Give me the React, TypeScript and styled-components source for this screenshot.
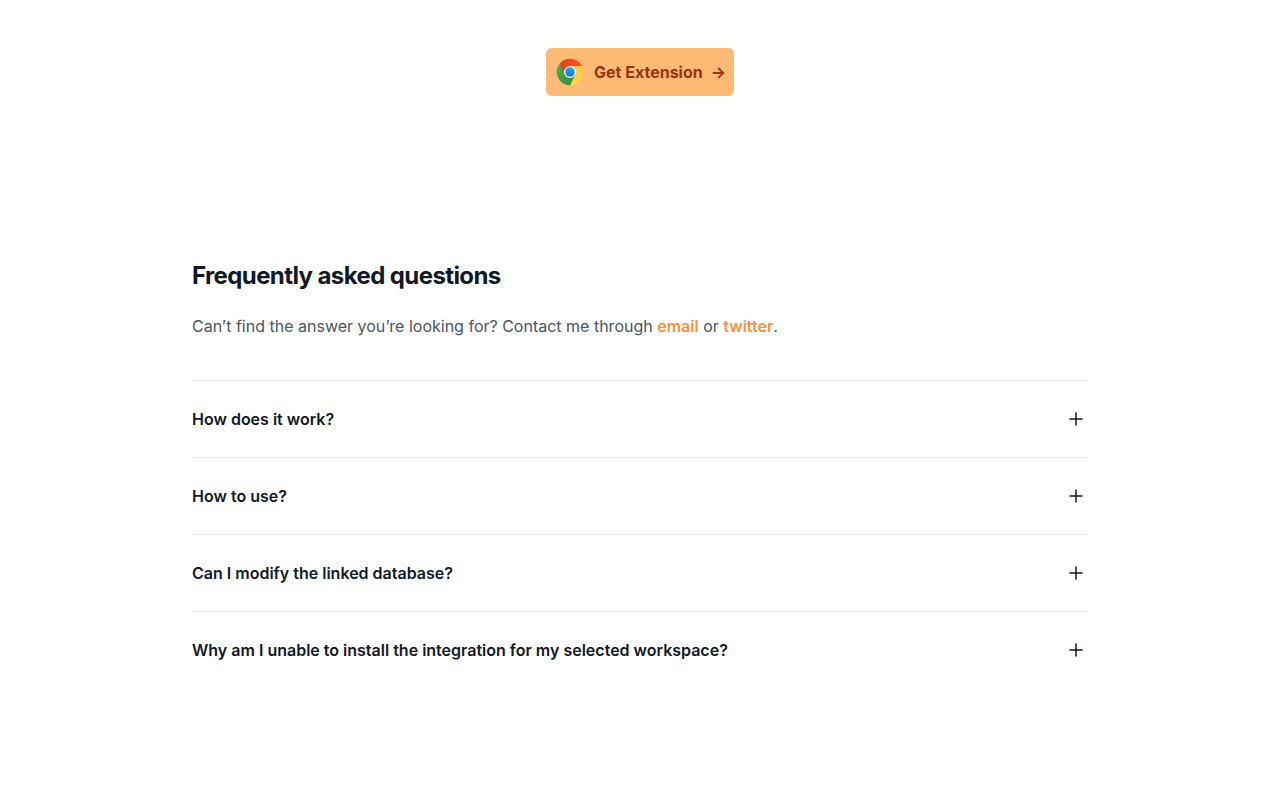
import { useState } from 'react'
import styled, { createGlobalStyle } from 'styled-components'

type FaqItem = {
  question: string
  answer: string
}

const FAQS: FaqItem[] = [
  { question: 'How does it work?', answer: '' },
  { question: 'How to use?', answer: '' },
  { question: 'Can I modify the linked database?', answer: '' },
  {
    question:
      'Why am I unable to install the integration for my selected workspace?',
    answer: '',
  },
]

export default function App() {
  return (
    <>
      <GlobalStyle />
      <StyledMain>
        <StyledHero>
          <GetExtensionButton />
        </StyledHero>
        <FaqSection />
      </StyledMain>
    </>
  )
}

function GetExtensionButton() {
  return (
    <StyledExtensionButton type='button'>
      <ChromeLogo />
      <span>Get Extension</span>
      <span aria-hidden='true'>→</span>
    </StyledExtensionButton>
  )
}

function FaqSection() {
  return (
    <StyledFaq>
      <h2>Frequently asked questions</h2>
      <p>
        Can’t find the answer you’re looking for? Contact me through{' '}
        <StyledLink href='#email'>email</StyledLink> or{' '}
        <StyledLink href='#twitter'>twitter</StyledLink>.
      </p>
      <StyledFaqList>
        {FAQS.map((faq) => (
          <FaqRow key={faq.question} {...faq} />
        ))}
      </StyledFaqList>
    </StyledFaq>
  )
}

function FaqRow({ question, answer }: FaqItem) {
  const [isOpen, setIsOpen] = useState(false)

  return (
    <StyledFaqRow>
      <dt>
        <StyledQuestion
          type='button'
          aria-expanded={isOpen}
          onClick={() => setIsOpen(!isOpen)}
        >
          <span>{question}</span>
          <ToggleIcon isOpen={isOpen} />
        </StyledQuestion>
      </dt>
      {isOpen && answer && <dd>{answer}</dd>}
    </StyledFaqRow>
  )
}

function ToggleIcon({ isOpen }: { isOpen: boolean }) {
  return (
    <svg
      width='24'
      height='24'
      viewBox='0 0 24 24'
      fill='none'
      stroke='currentColor'
      strokeWidth='1.5'
      strokeLinecap='round'
      strokeLinejoin='round'
      aria-hidden='true'
    >
      <path d={isOpen ? 'M18 12H6' : 'M12 6v12m6-6H6'} />
    </svg>
  )
}

function ChromeLogo() {
  return (
    <svg width='32' height='32' viewBox='0 0 48 48' aria-hidden='true'>
      <defs>
        <linearGradient
          id='chrome-red'
          x1='6.7'
          y1='14'
          x2='41.3'
          y2='14'
          gradientUnits='userSpaceOnUse'
        >
          <stop offset='0' stopColor='#d93f21' />
          <stop offset='1' stopColor='#ff5722' />
        </linearGradient>
        <linearGradient
          id='chrome-yellow'
          x1='22'
          y1='43'
          x2='40'
          y2='14'
          gradientUnits='userSpaceOnUse'
        >
          <stop offset='0' stopColor='#ffd747' />
          <stop offset='1' stopColor='#ffc43f' />
        </linearGradient>
        <linearGradient
          id='chrome-green'
          x1='8'
          y1='14'
          x2='24'
          y2='43'
          gradientUnits='userSpaceOnUse'
        >
          <stop offset='0' stopColor='#4caf50' />
          <stop offset='1' stopColor='#388e3c' />
        </linearGradient>
        <linearGradient id='chrome-blue' x1='0' y1='0' x2='0' y2='1'>
          <stop offset='0' stopColor='#2aa4f4' />
          <stop offset='1' stopColor='#007ad9' />
        </linearGradient>
      </defs>
      <path
        fill='url(#chrome-yellow)'
        d='M24 15h17.9A20 20 0 0 1 24 44l7.8-15.5z'
      />
      <path
        fill='url(#chrome-green)'
        d='M8.2 11.8L24 24l7.8 4.5L24 44A20 20 0 0 1 8.2 11.8z'
      />
      <path
        fill='url(#chrome-red)'
        d='M24 24L16.2 28.5 8.2 11.8A20 20 0 0 1 41.9 15H24z'
      />
      <circle cx='24' cy='24' r='9' fill='#fff' />
      <circle cx='24' cy='24' r='7' fill='url(#chrome-blue)' />
    </svg>
  )
}

const GlobalStyle = createGlobalStyle`
  *,
  *::before,
  *::after {
    box-sizing: border-box;
  }

  body {
    margin: 0;
    background: #fff;
    color: #111827;
    font-family: Inter, sans-serif;
    font-size: 16px;
    line-height: 24px;
    -webkit-font-smoothing: antialiased;
  }

  h2,
  p,
  dl,
  dd {
    margin: 0;
  }

  button {
    border: 0;
    font: inherit;
    cursor: pointer;
  }
`

const StyledMain = styled.main`
  max-width: 960px;
  margin: 0 auto;
  padding: 48px 32px;
`

const StyledHero = styled.div`
  display: flex;
  justify-content: center;
`

const StyledExtensionButton = styled.button`
  display: flex;
  align-items: center;
  gap: 8px;
  padding: 8px;
  border-radius: 6px;
  background: #fdba74;
  color: #9a3412;

  span {
    font-weight: 700;
  }
`

const StyledFaq = styled.section`
  padding: 160px 0 72px;

  h2 {
    font-size: 24px;
    font-weight: 700;
    line-height: 40px;
    letter-spacing: -0.025em;
  }

  p {
    margin-top: 16px;
    color: #4b5563;
    line-height: 28px;
  }
`

const StyledLink = styled.a`
  color: #fb923c;
  font-weight: 600;
  text-decoration: none;
`

const StyledFaqList = styled.dl`
  && {
    margin-top: 40px;
  }
`

const StyledFaqRow = styled.div`
  padding: 24px 0;
  border-top: 1px solid #e5e7eb;

  dd {
    margin-top: 8px;
    color: #4b5563;
  }
`

const StyledQuestion = styled.button`
  display: flex;
  align-items: center;
  justify-content: space-between;
  width: 100%;
  padding: 0;
  background: none;
  color: #111827;
  text-align: left;

  span {
    font-weight: 600;
    line-height: 28px;
  }
`
